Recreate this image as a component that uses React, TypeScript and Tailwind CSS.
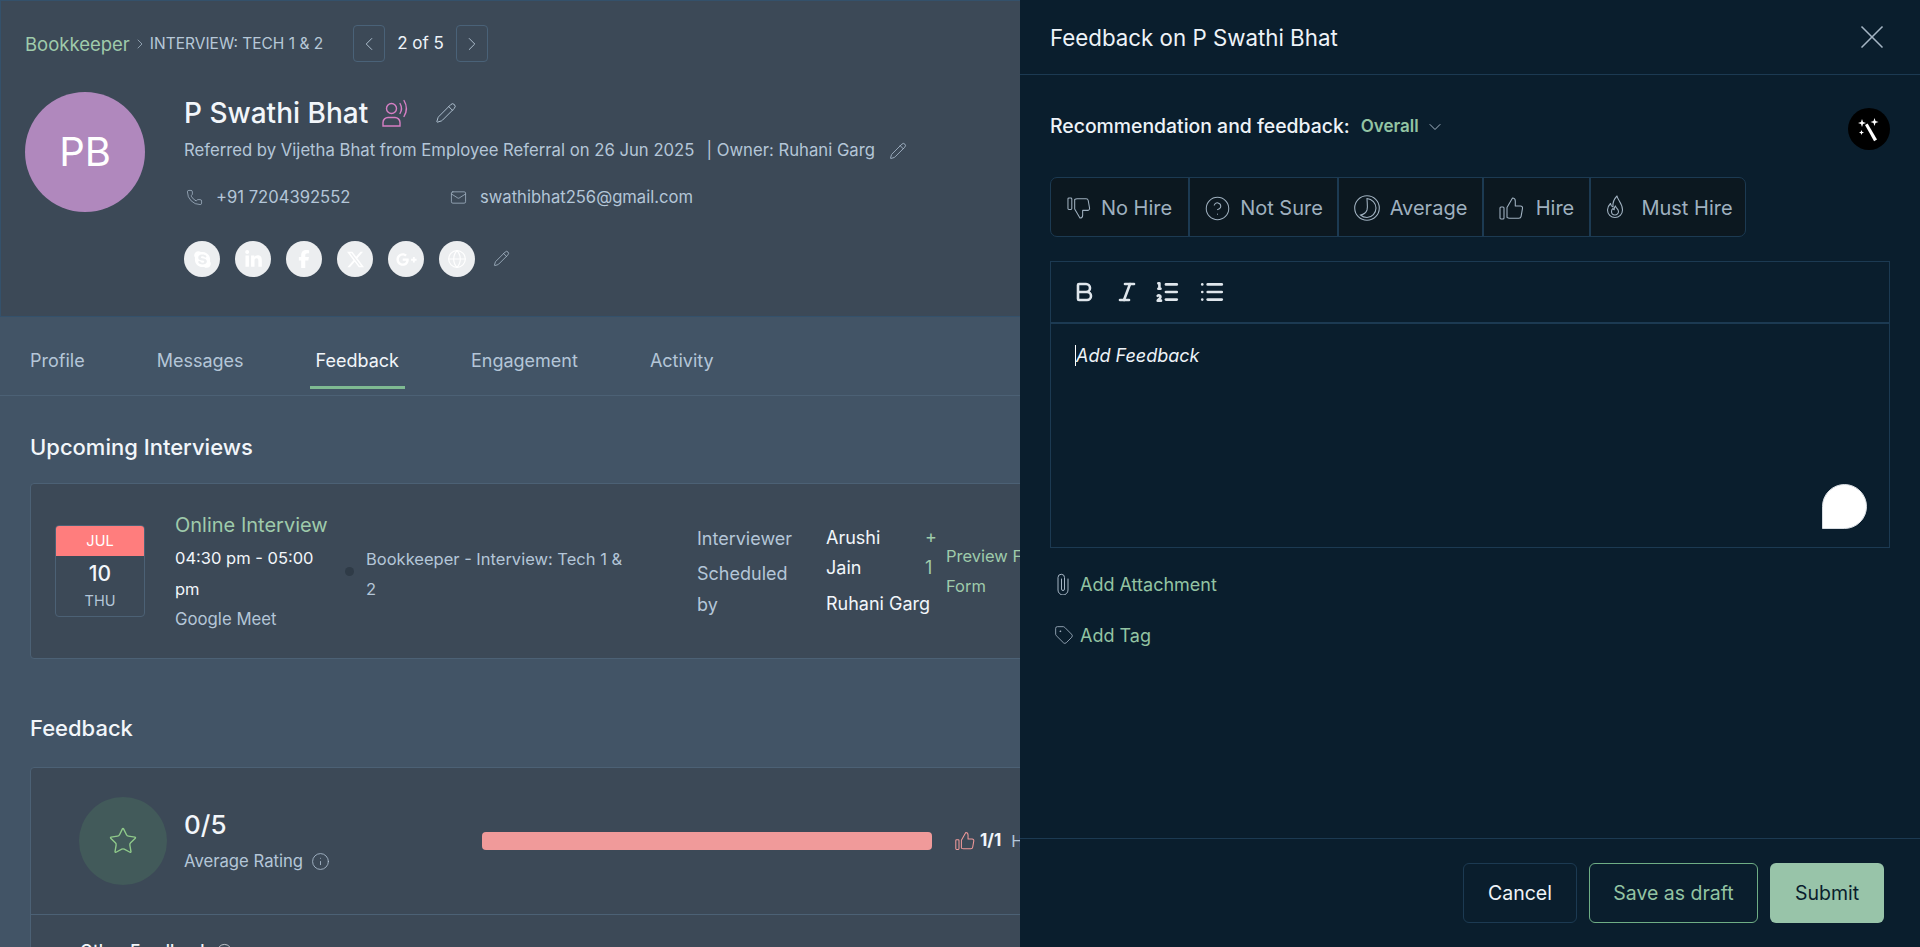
import React from "react";
import {
  ChevronLeft, ChevronRight, ChevronDown, Pencil, Phone, Mail, Globe, Star, Info,
  CircleHelp, Bold, Italic, ListOrdered, List, Tag, X,
} from "lucide-react";
import { FaSkype, FaLinkedinIn, FaFacebookF, FaXTwitter, FaGooglePlusG } from "react-icons/fa6";

const font = { fontFamily: "Inter, Lato, sans-serif" };

function Speaker() {
  return (
    <svg width="28" height="28" viewBox="0 0 28 28" fill="none" stroke="#d67fc4" strokeWidth="1.4" strokeLinecap="round">
      <circle cx="9.5" cy="9.5" r="5" />
      <path d="M1 27v-3.5c0-3 2.5-5 5-5h7c2.5 0 5 2 5 5V27z" />
      <path d="M18 4.5c1.8 3 1.8 7 0 10" />
      <path d="M22 1.500c3 5 3 11 0 16" />
    </svg>
  );
}

function Thumb({ size = 25, color = "currentColor", flip = false, width = 1.1 }: { size?: number; color?: string; flip?: boolean; width?: number }) {
  return (
    <svg width={size} height={size} viewBox="0 0 25 25" fill="none" stroke={color} strokeWidth={width} strokeLinejoin="round" style={flip ? { transform: "scaleY(-1)" } : undefined}>
      <rect x="1" y="11" width="4" height="12" rx="1" />
      <path d="M8 11.500 13.500 2c1.500 0 2.800 1.200 2.800 3v5h5.200c1.300 0 2.200 1.100 2 2.300l-1.400 8c-.2 1.100-1.100 1.900-2.200 1.900H10.500c-1 0-1.800-.3-2.500-.8z" />
    </svg>
  );
}

function AverageIcon() {
  return (
    <svg width="26" height="26" viewBox="0 0 26 26" fill="none" stroke="currentColor" strokeWidth="1.1">
      <circle cx="13" cy="13" r="12.3" />
      <path d="M13 3.500c5 .5 9 4.500 9 9.500s-4 9.500-9 9.500c-2.500 0-5-1-6.500-2.500 3-.5 5.500-2 6.500-5 1-3.500 0-8 0-11.500z" />
    </svg>
  );
}

function FlameIcon() {
  return (
    <svg width="26" height="28" viewBox="0 0 26 28" fill="none" stroke="currentColor" strokeWidth="1.1" strokeLinejoin="round">
      <path d="M14 2c.5 4 5.500 7 5.500 14a7.500 7.500 0 0 1-15 0c0-3 1.500-5 3-6.500.3 2 1 3 2.500 3.500C9.500 9 11 5 14 2z" />
      <path d="M12.500 12c.3 2 3 3 3 5.500a3.500 3.500 0 0 1-7 0c0-1.500.8-2.500 1.500-3 .3.8.8 1.200 1.200 1.300-.2-1.300.3-2.800 1.300-3.800z" />
    </svg>
  );
}

function Clip() {
  return (
    <svg width="16" height="22" viewBox="0 0 14 22" fill="none" stroke="currentColor" strokeWidth="1" strokeLinecap="round">
      <path d="M12 6v11a5 5 0 0 1-10 0V4.500a3.200 3.200 0 0 1 6.500 0V16a1.500 1.500 0 0 1-3 0V6" />
    </svg>
  );
}

function Wand() {
  return (
    <svg width="30" height="30" viewBox="0 0 30 30" fill="white">
      <path d="M11 11l2.600-1.600 9.400 16.200-2.900 1.700z" />
      <path d="M8 5l1 3 3 1-3 1-1 3-1-3-3-1 3-1z" />
      <path d="M20.500 4l1 3 3 1-3 1-1 3-1-3-3-1 3-1z" />
      <path d="M7.500 16l.7 1.800 1.800.7-1.800.7-.7 1.800-.7-1.800-1.800-.7 1.800-.7z" />
    </svg>
  );
}

const tabs = ["Profile", "Messages", "Feedback", "Engagement", "Activity"];
const socials = [
  <FaSkype size={19} />, <FaLinkedinIn size={19} />, <FaFacebookF size={18} />, <FaXTwitter size={19} />,
  <FaGooglePlusG size={21} />, <Globe size={20} strokeWidth={1.4} />,
];
const options = [
  { label: "No Hire", icon: <Thumb size={24} flip />, w: "w-[137px]", gap: "gap-[10px]" },
  { label: "Not Sure", icon: <CircleHelp size={27} strokeWidth={0.9} />, w: "w-[149px]", gap: "gap-[9px]" },
  { label: "Average", icon: <AverageIcon />, w: "w-[145px]", gap: "gap-[10px]" },
  { label: "Hire", icon: <Thumb size={25} />, w: "w-[107px]", gap: "gap-[12px]" },
  { label: "Must Hire", icon: <FlameIcon />, w: "w-[156px]", gap: "gap-[12px]" },
];

export default function App() {
  return (
    <div style={font} className="relative h-[947px] w-[1920px] overflow-hidden bg-[#425466] text-white">
      <main className="h-full w-full">
        <header className="h-[317px] border border-[#34516b] bg-[#3c4957] pl-[24px]">
          <div className="mt-[24px] flex h-[37px] items-center">
            <span className="pt-[2px] text-[18.5px] text-[#9fcbab]">Bookkeeper</span>
            <ChevronRight size={16} strokeWidth={1} className="ml-[2px] text-[#b7c8d8]" />
            <span className="ml-[2px] pt-[1px] text-[15.5px] text-[#b7c8d8]">INTERVIEW: TECH 1 &amp; 2</span>
            <button className="ml-[30px] flex h-[37px] w-[32px] items-center justify-center rounded-[4px] border border-[#4a6278] text-[#b7c8d8]">
              <ChevronLeft size={22} strokeWidth={1} />
            </button>
            <span className="mx-[12px] pt-[1px] text-[17px] text-[#eef3f8]">2 of 5</span>
            <button className="flex h-[37px] w-[32px] items-center justify-center rounded-[4px] border border-[#4a6278] text-[#b7c8d8]">
              <ChevronRight size={22} strokeWidth={1} />
            </button>
          </div>
          <div className="mt-[30px] flex">
            <div className="flex h-[120px] w-[120px] items-center justify-center rounded-full bg-[#b088bd] text-[40px]">PB</div>
            <div className="ml-[39px]">
              <div className="flex h-[40px] items-center pt-[2px]">
                <span className="text-[28px] font-medium text-[#f2f6fa]">P Swathi Bhat</span>
                <span className="ml-[14px]"><Speaker /></span>
                <Pencil size={22} strokeWidth={1} className="ml-[25px] text-[#b7c8d8]" />
              </div>
              <div className="mt-[7px] flex h-[24px] items-center text-[16.7px] text-[#b4c6d8]">
                <span>Referred by Vijetha Bhat from Employee Referral on 26 Jun 2025</span>
                <span className="ml-[12px]">| Owner: Ruhani Garg</span>
                <Pencil size={18} strokeWidth={1} className="ml-[14px]" />
              </div>
              <div className="mt-[22px] flex h-[24px] items-center text-[16.6px] text-[#b4c6d8]">
                <Phone size={17} strokeWidth={1} className="ml-[2px] text-[#aebfd0]" />
                <span className="ml-[13px] w-[234px]">+91 7204392552</span>
                <Mail size={17} strokeWidth={1} className="text-[#aebfd0]" />
                <span className="ml-[13px]">swathibhat256@gmail.com</span>
              </div>
              <div className="mt-[32px] flex items-center gap-[15px]">
                {socials.map((s, i) => (
                  <div key={i} className="flex h-[36px] w-[36px] items-center justify-center rounded-full bg-[#eceef0] text-white">{s}</div>
                ))}
                <Pencil size={17} strokeWidth={1} className="ml-[3px] mb-[2px] text-[#b7c8d8]" />
              </div>
            </div>
          </div>
        </header>

        <nav className="flex h-[79px] items-stretch border-b border-[#4c6175] pl-[24px] text-[18px]">
          {tabs.map((t) => (
            <div
              key={t}
              className={
                t === "Feedback"
                  ? "mr-[60px] flex h-[72px] items-center border-b-[3px] border-[#7fba92] px-[6px] pt-[18px] text-[#f2f6fa]"
                  : "mr-[60px] flex h-[72px] items-center border-b-[3px] border-transparent px-[6px] pt-[18px] text-[#b4c6d8]"
              }
            >
              {t}
            </div>
          ))}
        </nav>

        <section className="pl-[30px]">
          <h2 className="mt-[37px] text-[22px] font-medium leading-[28px] text-[#f2f6fa]">Upcoming Interviews</h2>
          <div className="mt-[22px] flex h-[176px] w-[1300px] items-center rounded-[4px] border border-[#4c6175] bg-[#3c4957] pl-[24px]">
            <div className="h-[92px] w-[90px] shrink-0 overflow-hidden rounded-[4px] border border-[#4c6175] text-center">
              <div className="flex h-[30px] items-center justify-center bg-[#ff7d7d] text-[14.5px]">JUL</div>
              <div className="mt-[3px] text-[21px] font-medium leading-[30px] text-[#f2f6fa]">10</div>
              <div className="text-[14.5px] leading-[24px] text-[#b4c6d8]">THU</div>
            </div>
            <div className="ml-[30px] w-[157px] shrink-0">
              <div className="whitespace-nowrap pt-[1px] text-[20px] leading-[30px] text-[#9fcbab]">Online Interview</div>
              <div className="mt-[3px] text-[16.5px] leading-[31px] text-[#f2f6fa]">04:30 pm - 05:00 pm</div>
              <div className="text-[16.75px] leading-[28px] text-[#b4c6d8]">Google Meet</div>
            </div>
            <div className="ml-[13px] h-[9px] w-[9px] shrink-0 rounded-full bg-[#2f3b47]" />
            <div className="ml-[12px] mt-[6px] w-[265px] shrink-0 text-[16.5px] leading-[30px] text-[#b4c6d8]">Bookkeeper - Interview: Tech 1 &amp; 2</div>
            <div className="ml-[66px] w-[129px] shrink-0 text-[18px] leading-[31px] text-[#b4c6d8]">
              <div>Interviewer</div>
              <div className="mt-[4px] w-[100px]">Scheduled by</div>
            </div>
            <div className="w-[120px] shrink-0 text-[18px] leading-[30px] text-[#f2f6fa]">
              <div className="flex">
                <span className="mr-[39px] w-[60px]">Arushi Jain</span>
                <span className="w-[12px] text-[#9fcbab]">+ 1</span>
              </div>
              <div className="mt-[6px] whitespace-nowrap">Ruhani Garg</div>
            </div>
            <div className="w-[150px] text-[16.5px] leading-[30px] text-[#9fcbab]">Preview Feedback Form</div>
          </div>

          <h2 className="mt-[55px] text-[22px] font-medium leading-[28px] text-[#f2f6fa]">Feedback</h2>
          <div className="mt-[25px] w-[1300px] rounded-[4px] border border-[#4c6175] bg-[#3c4957]">
            <div className="flex h-[147px] items-center border-b border-[#4c6175] pl-[48px]">
              <div className="flex h-[88px] w-[88px] shrink-0 items-center justify-center rounded-full bg-[#425a5a] text-[#8fc98a]">
                <Star size={30} strokeWidth={1.1} />
              </div>
              <div className="ml-[17px] w-[298px]">
                <div className="text-[26px] font-medium leading-[36px] text-[#f2f6fa]">0/5</div>
                <div className="mt-[6px] flex items-center gap-[8px] text-[16.7px] text-[#b4c6d8]">
                  Average Rating <Info size={19} strokeWidth={1} />
                </div>
              </div>
              <div className="h-[18px] w-[450px] shrink-0 rounded-[4px] bg-[#f09a9a]" />
              <span className="ml-[23px]"><Thumb size={20} color="#f09a9a" width={1.3} /></span>
              <span className="ml-[5px] text-[17px] font-bold text-[#f2f6fa]">1/1</span>
              <span className="ml-[10px] text-[16px] text-[#b4c6d8]">Hire</span>
            </div>
            <div className="flex items-center gap-[6px] pl-[49px] pt-[24px] text-[17px] font-medium text-[#f2f6fa]">
              Other Feedback <Info size={17} strokeWidth={1} />
            </div>
          </div>
        </section>
      </main>

      <aside className="absolute inset-y-0 right-0 flex w-[900px] flex-col bg-[#0a1e2d]">
        <div className="flex h-[75px] shrink-0 items-center justify-between border-b border-[#1c3a52] px-[30px]">
          <span className="pt-[2px] text-[22.3px] text-[#eef3f8]">Feedback on P Swathi Bhat</span>
          <X size={40} strokeWidth={1} className="mb-[1px] mr-[-2px] text-[#a5b5c4]" />
        </div>

        <div className="flex-1 px-[30px]">
          <div className="mt-[33px] flex h-[42px] items-start justify-between">
            <div className="flex h-[36px] items-center pt-[2px]">
              <span className="text-[19.4px] font-medium text-[#eef3f8]">Recommendation and feedback:</span>
              <span className="ml-[11px] text-[17px] font-semibold text-[#93c4a3]">Overall</span>
              <ChevronDown size={20} strokeWidth={1.2} className="ml-[6px] text-[#a5b5c4]" />
            </div>
            <div className="flex h-[42px] w-[42px] items-center justify-center rounded-full bg-black"><Wand /></div>
          </div>

          <div className="mt-[27px] flex h-[60px] w-fit overflow-hidden rounded-[7px] border border-[#1c3a52] bg-[#0c1820]">
            {options.map((o, i) => (
              <div key={o.label} className={(i > 0 ? "border-l-2 border-[#1c3a52] " : "") + o.w + " " + o.gap + " flex items-center justify-center pt-[2px] text-[20px] text-[#9fb0bf]"}>
                {o.icon}
                <span>{o.label}</span>
              </div>
            ))}
          </div>

          <div className="mt-[24px] h-[287px] w-[840px] border border-[#1c3a52]">
            <div className="flex h-[62px] items-center gap-[19px] border-b-2 border-[#1c3a52] pl-[21px] text-[#dfe6ec]">
              <Bold size={24} strokeWidth={2.6} />
              <Italic size={24} strokeWidth={2.6} />
              <span className="ml-[-4px]"><ListOrdered size={26} strokeWidth={2.4} /></span>
              <List size={26} strokeWidth={2.4} />
            </div>
            <div className="relative h-[223px] pl-[24px] pt-[20px]">
              <span className="border-l border-white text-[18px] italic leading-[24px] text-[#eef3f8]">Add Feedback</span>
              <div className="absolute bottom-[18px] right-[22px] h-[45px] w-[45px] rounded-full rounded-bl-none border border-[#d8dde2] bg-white" />
            </div>
          </div>

          <div className="mt-[23px] flex h-[26px] items-center text-[18px] text-[#93c4a3]">
            <span className="ml-[5px] text-[#a5b5c4]"><Clip /></span>
            <span className="ml-[9px]">Add Attachment</span>
          </div>
          <div className="mt-[25px] flex h-[26px] items-center text-[18px] text-[#93c4a3]">
            <Tag size={20} strokeWidth={1} className="ml-[4px] text-[#a5b5c4]" />
            <span className="ml-[6px]">Add Tag</span>
          </div>
        </div>

        <div className="flex h-[109px] shrink-0 items-start justify-end gap-[12px] border-t border-[#1c3a52] pr-[36px] pt-[24px] text-[19.5px]">
          <button className="h-[60px] w-[114px] rounded-[6px] border border-[#1c3a52] pt-[1px] text-[#eef3f8]">Cancel</button>
          <button className="h-[60px] w-[169px] rounded-[6px] border border-[#6fae85] pt-[1px] text-[#93c4a3]">Save as draft</button>
          <button className="h-[60px] w-[114px] rounded-[6px] bg-[#98c4a9] pt-[1px] text-[#0a1e2d]">Submit</button>
        </div>
      </aside>
    </div>
  );
}
